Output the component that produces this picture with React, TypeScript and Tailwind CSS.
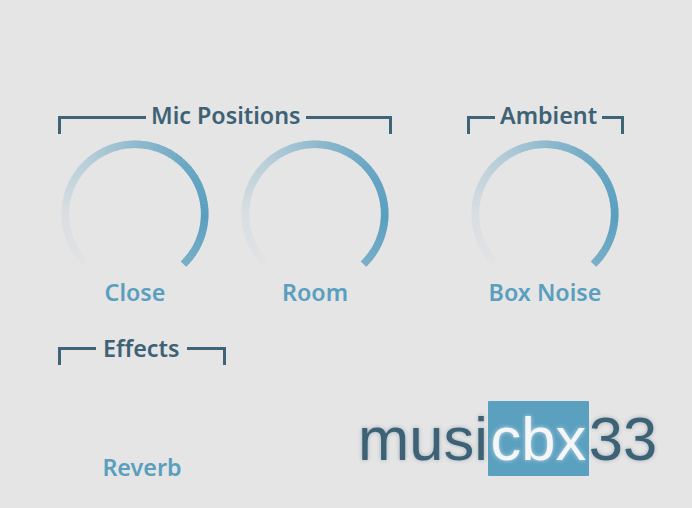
// Colour of the arc along the sweep, as [degrees clockwise from the start, opacity over the page].
const STOPS: [number, number][] = [
  [0, 0.03],
  [45, 0.1],
  [90, 0.32],
  [135, 0.62],
  [180, 0.88],
  [225, 1],
  [270, 0.76],
];

function opacityAt(t: number) {
  for (let i = 1; i < STOPS.length; i++) {
    const [a, oa] = STOPS[i - 1];
    const [b, ob] = STOPS[i];
    if (t <= b) return oa + ((ob - oa) * (t - a)) / (b - a);
  }
  return STOPS[STOPS.length - 1][1];
}

function blend(alpha: number) {
  const from = [0xe5, 0xe5, 0xe5];
  const to = [0x5a, 0x9f, 0xbf];
  const mixed = from.map((v, i) => Math.round(v + (to[i] - v) * alpha));
  return `rgb(${mixed[0]},${mixed[1]},${mixed[2]})`;
}

function Knob() {
  const r = 69.7;
  const c = 75;
  const startDeg = 136;
  const sweep = 270;
  const n = 135;
  const pt = (deg: number) => {
    const a = (deg * Math.PI) / 180;
    return `${c + r * Math.cos(a)} ${c + r * Math.sin(a)}`;
  };
  const segments = Array.from({ length: n }, (_, i) => {
    const t0 = (sweep * i) / n;
    const t1 = Math.min((sweep * (i + 1)) / n + 0.8, sweep);
    const d = `M${pt(startDeg + t0)}A${r} ${r} 0 0 1 ${pt(startDeg + t1)}`;
    return <path key={i} d={d} fill="none" stroke={blend(opacityAt(t0))} strokeWidth={7.6} />;
  });
  return (
    <svg width={150} height={132} viewBox="0 0 150 132" className="block">
      {segments}
    </svg>
  );
}

function KnobWithLabel({ label }: { label: string }) {
  return (
    <div className="flex w-[150px] flex-col items-center">
      <Knob />
      <span className="mt-[6px] text-[23.3px] leading-[30px] font-semibold text-[#5a9fbf]">{label}</span>
    </div>
  );
}

function GroupHeader({
  title,
  gap,
  lineTop,
  leftWidth,
}: {
  title: string;
  gap: string;
  lineTop: string;
  leftWidth: string;
}) {
  return (
    <div className={`flex h-[32px] items-start ${gap}`}>
      <div className={`h-[18px] border-t-[3px] border-l-[3px] border-[#3f6478] ${lineTop} ${leftWidth}`} />
      <span className="text-[23.3px] leading-[30px] font-semibold text-[#3d6175]">{title}</span>
      <div className={`h-[18px] flex-1 border-t-[3px] border-r-[3px] border-[#3f6478] ${lineTop}`} />
    </div>
  );
}

export default function App() {
  return (
    <div className="h-[508px] w-[692px] overflow-hidden bg-[#e5e5e5] pt-[100px] pl-[58px] font-['Noto_Sans',sans-serif]">
      <div className="flex">
        <section className="w-[334px]">
          <GroupHeader title="Mic Positions" gap="gap-[5px]" lineTop="mt-[16px]" leftWidth="w-[88px]" />
          <div className="mt-[7px] flex gap-[30px] pl-[2px]">
            <KnobWithLabel label="Close" />
            <KnobWithLabel label="Room" />
          </div>
        </section>
        <section className="ml-[75px] w-[157px]">
          <GroupHeader title="Ambient" gap="gap-[5px]" lineTop="mt-[16px]" leftWidth="w-[28px]" />
          <div className="mt-[7px] ml-[3px]">
            <KnobWithLabel label="Box Noise" />
          </div>
        </section>
      </div>
      <div className="mt-[25.8px] flex items-start">
        <section className="w-[168px]">
          <GroupHeader title="Effects" gap="gap-[7px]" lineTop="mt-[14px]" leftWidth="w-[38px]" />
          <div className="mt-[87px] text-center text-[23.3px] leading-[30px] font-semibold text-[#5a9fbf]">Reverb</div>
        </section>
        <div className="mt-[68.5px] ml-[132px] flex items-center font-['Liberation_Sans',sans-serif] text-[61.5px] leading-[75px] text-[#3d6175] [text-shadow:0_0_4px_rgba(61,97,117,0.4)]">
          <span>musi</span>
          <span className="rounded-[1px] bg-[#5ca0c0] px-[2.65px] text-[#f4f6f7] [text-shadow:0_0_4px_rgba(255,255,255,0.6)]">cbx</span>
          <span>33</span>
        </div>
      </div>
    </div>
  );
}
